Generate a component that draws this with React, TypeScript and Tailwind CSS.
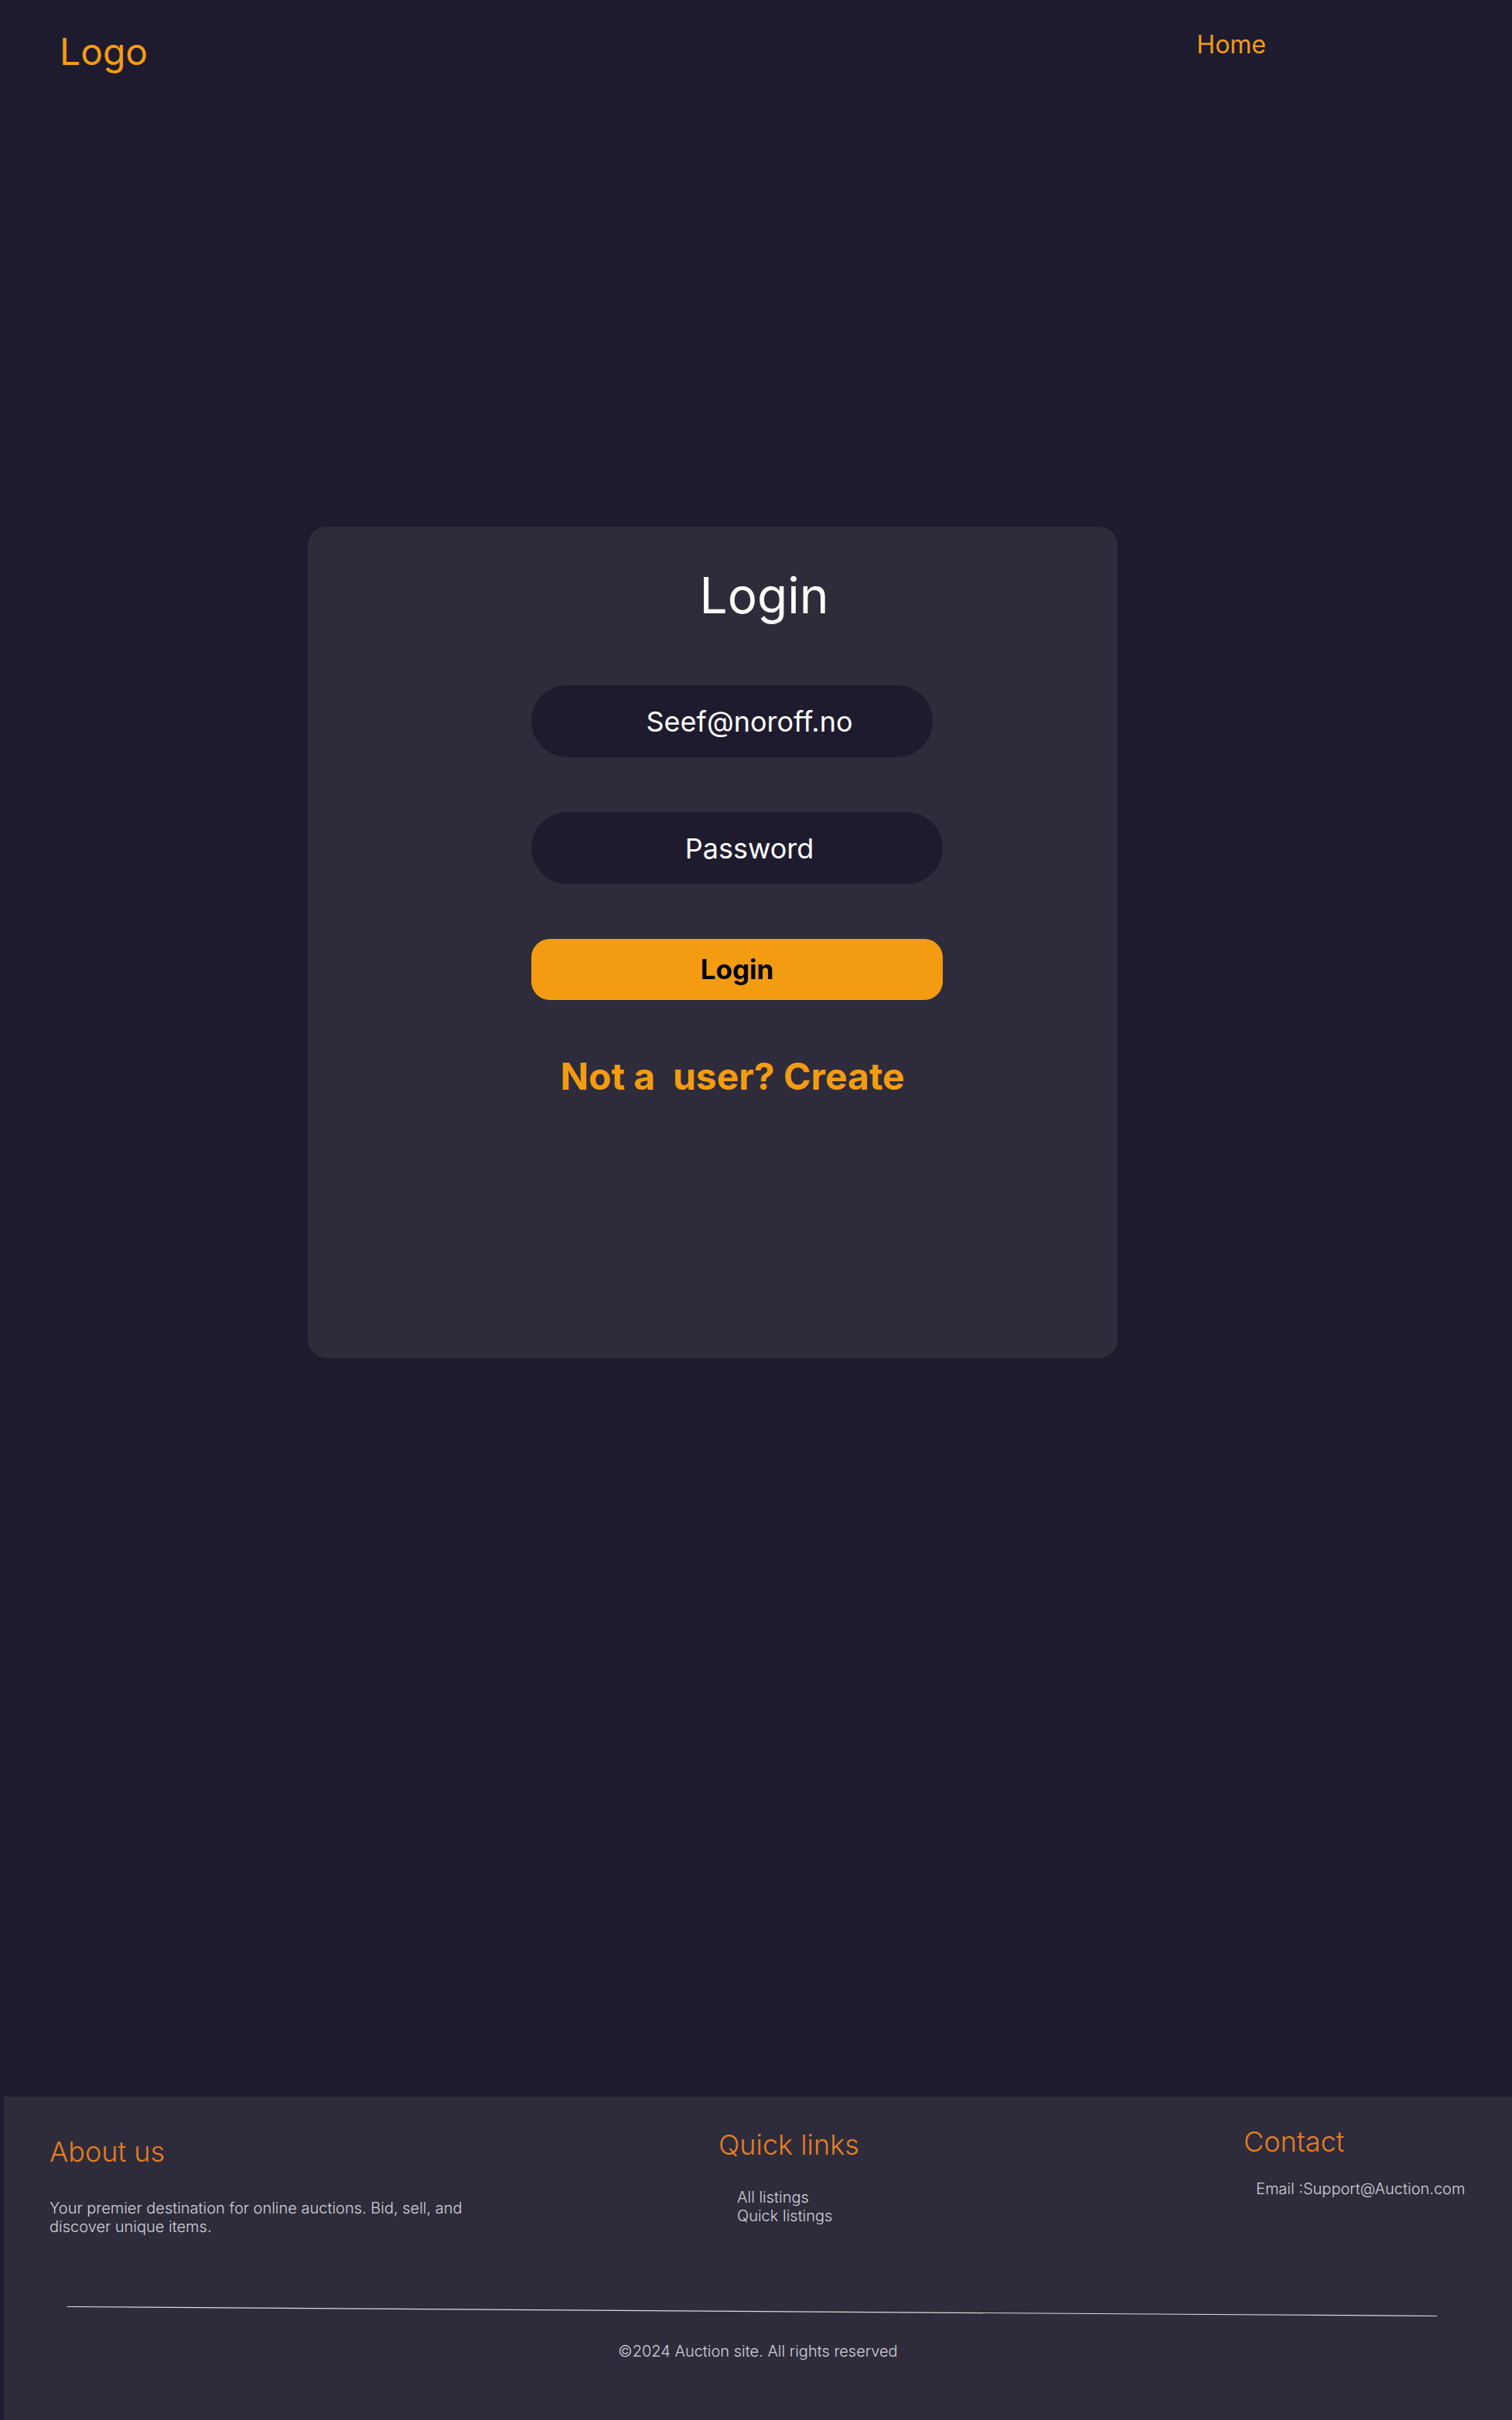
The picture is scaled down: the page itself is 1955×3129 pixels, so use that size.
import React from "react";

function Header() {
  return (
    <header className="flex items-start justify-between pt-[43px] pl-[77px] pr-[318px]">
      <a href="#" className="text-[48px] leading-none text-[#f39c12]">
        Logo
      </a>
      <nav className="-mt-[1px]">
        <a href="#" className="text-[32px] leading-none text-[#f39c12]">
          Home
        </a>
      </nav>
    </header>
  );
}

function LoginCard() {
  return (
    <section className="mt-[590px] ml-[398px] h-[1075px] w-[1047px] rounded-3xl bg-[#2e2c3b] pt-[57px]">
      <h1 className="pl-[133px] text-center text-[64px] leading-none text-white">
        Login
      </h1>
      <form
        className="ml-[289px] flex w-[532px] flex-col"
        onSubmit={(e) => e.preventDefault()}
      >
        <input
          type="email"
          defaultValue="Seef@noroff.no"
          className="mt-[84px] h-[93px] w-[519px] rounded-full bg-[#1e1b2e] pl-[45px] text-center text-[36px] text-white outline-none"
        />
        <input
          type="password"
          placeholder="Password"
          className="mt-[71px] h-[93px] w-[532px] rounded-full bg-[#1e1b2e] pl-[32px] text-center text-[36px] text-white outline-none placeholder:text-white"
        />
        <button
          type="submit"
          className="mt-[71px] h-[79px] w-[532px] rounded-3xl bg-[#f39c12] text-[35px] font-bold text-black"
        >
          Login
        </button>
        <p className="mt-[75px] pr-[12px] text-center text-[48px] font-bold leading-none whitespace-pre text-[#f39c12]">
          Not a  user? Create
        </p>
      </form>
    </section>
  );
}

function Footer() {
  return (
    <footer className="mt-auto ml-[5px] h-[418px] bg-[#2e2c3b] pt-[40px]">
      <div className="grid grid-cols-[865px_679px_1fr] items-start pl-[59px]">
        <div className="mt-[13px]">
          <h2 className="text-[36px] font-light leading-none text-[#e67e22]">
            About us
          </h2>
          <p className="mt-[43px] w-[560px] text-[20px] font-light leading-[24px] text-[#d2d0d8]">
            Your premier destination for online auctions. Bid, sell, and
            discover unique items.
          </p>
        </div>
        <div className="mt-[4px]">
          <h2 className="text-[36px] font-light leading-none text-[#e67e22]">
            Quick links
          </h2>
          <ul className="mt-[38px] pl-[24px] text-[20px] font-light leading-[24px] text-[#d2d0d8]">
            <li>
              <a href="#">All listings</a>
            </li>
            <li>
              <a href="#">Quick listings</a>
            </li>
          </ul>
        </div>
        <div>
          <h2 className="text-[36px] font-light leading-none text-[#e67e22]">
            Contact
          </h2>
          <p className="mt-[31px] pl-[16px] text-[20px] font-light leading-[24px] text-[#d2d0d8]">
            Email :Support@Auction.com
          </p>
        </div>
      </div>

      {/* the divider in the design is slightly tilted */}
      <svg
        width="1772"
        height="13"
        viewBox="0 0 1772 13"
        className="mt-[91px] ml-[82px] block"
      >
        <line x1="0" y1="0.5" x2="1771" y2="12.5" stroke="#d9d9de" strokeWidth="1.2" />
      </svg>

      <p className="mt-[35px] text-center text-[20px] font-light leading-none text-[#d2d0d8]">
        ©2024 Auction site. All rights reserved
      </p>
    </footer>
  );
}

export default function App() {
  return (
    <div className="flex min-h-screen flex-col bg-[#1e1b2e] font-['Inter',sans-serif]">
      <Header />
      <main>
        <LoginCard />
      </main>
      <Footer />
    </div>
  );
}
